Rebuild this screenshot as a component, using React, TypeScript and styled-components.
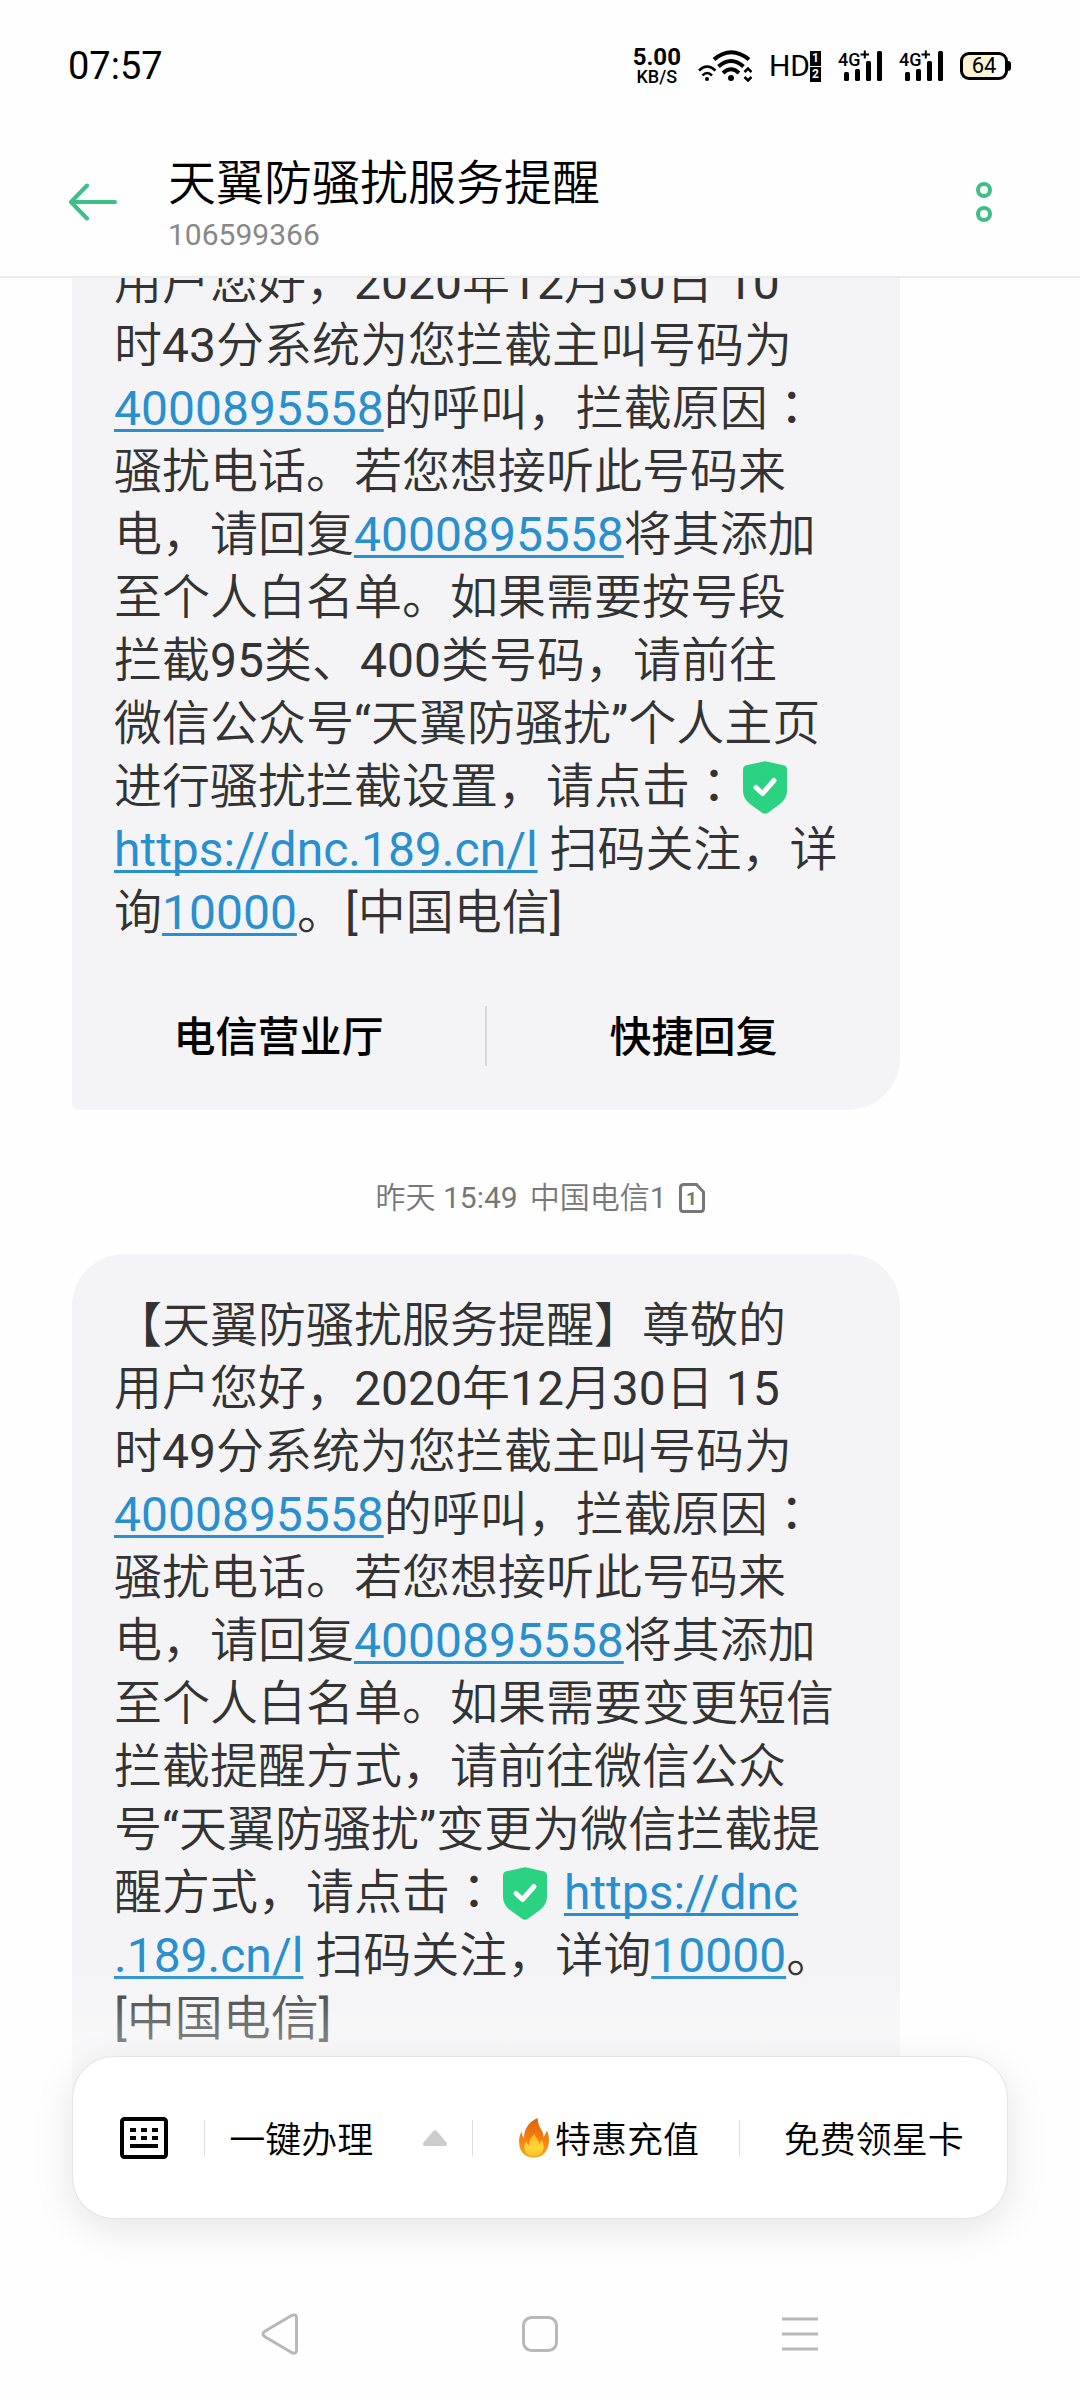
import React from "react";
import styled, { createGlobalStyle } from "styled-components";

const SANS = `Roboto, "Noto Sans CJK SC DemiLight", "Noto Sans CJK SC", sans-serif`;
const SANS_STRONG = `Roboto, "Noto Sans CJK SC", sans-serif`;
const GREEN = "#3cc086";

const GlobalStyle = createGlobalStyle`
  *, *::before, *::after { box-sizing: border-box; }
  body {
    margin: 0;
    background: #fefefe;
    color: #000;
    font-family: ${SANS};
    text-spacing-trim: space-all;
  }
  button {
    padding: 0;
    border: 0;
    background: none;
    color: inherit;
    font: inherit;
    cursor: pointer;
  }
  svg { display: block; flex: none; }
`;

const Page = styled.div`
  display: flex;
  flex-direction: column;
  height: 100vh;
  overflow: hidden;
`;

/* Status bar */

const StatusBar = styled.div`
  display: flex;
  align-items: center;
  justify-content: space-between;
  flex: none;
  height: 128px;
  padding: 4px 69px 0 68px;
`;

const Clock = styled.time`
  font-size: 38px;
  line-height: 44px;
`;

const StatusIcons = styled.div`
  display: flex;
  align-items: center;
  gap: 17px;
`;

const Speed = styled.div`
  display: flex;
  flex-direction: column;
  align-items: center;
  font-weight: 700;
`;

const SpeedValue = styled.span`
  font-size: 24px;
  line-height: 22px;
`;

const SpeedUnit = styled.span`
  font-size: 18px;
  font-weight: 500;
  line-height: 18px;
`;

const HdMark = styled.div`
  display: flex;
  align-items: center;
  font-size: 30px;
  line-height: 30px;
`;

const SimStack = styled.div`
  display: grid;
  gap: 1px;
`;

const SimCell = styled.span`
  width: 11px;
  background: #000;
  color: #fff;
  font-size: 12px;
  font-weight: 700;
  line-height: 15px;
  text-align: center;
`;

const Battery = styled.div`
  display: flex;
  align-items: center;
`;

const BatteryBody = styled.span`
  width: 48px;
  height: 28px;
  border: 3px solid #000;
  border-radius: 9px;
  background: linear-gradient(90deg, #fcf3d2 64%, #fff 64%);
  font-size: 22px;
  line-height: 22px;
  text-align: center;
`;

const BatteryTip = styled.span`
  width: 3px;
  height: 10px;
  border-radius: 0 3px 3px 0;
  background: #000;
`;

/* Conversation header */

const Header = styled.header`
  display: flex;
  align-items: center;
  flex: none;
  height: 150px;
  padding: 0 72px 0 68px;
  border-bottom: 2px solid #ececee;
`;

const IconButton = styled.button`
  display: flex;
  align-items: center;
  justify-content: center;
`;

const Contact = styled.div`
  flex: 1;
  min-width: 0;
  padding: 10px 0 0 50px;
`;

const ContactName = styled.h1`
  margin: 0;
  font-size: 48px;
  font-weight: 400;
  line-height: 56px;
`;

const ContactNumber = styled.p`
  margin: 0;
  color: #888;
  font-size: 30px;
  line-height: 46px;
`;

const MenuButton = styled(IconButton)`
  width: 48px;
`;

/* Messages */

const Thread = styled.main`
  position: relative;
  display: flex;
  flex: 1;
  flex-direction: column;
  justify-content: flex-end;
  min-height: 0;
  overflow: hidden;

  &::after {
    content: "";
    position: absolute;
    right: 0;
    bottom: 0;
    left: 0;
    height: 132px;
    background: linear-gradient(rgba(254, 254, 254, 0), rgba(254, 254, 254, 0.72));
    pointer-events: none;
  }
`;

const Bubble = styled.article<{ $last?: boolean }>`
  flex: none;
  margin: 0 180px 0 72px;
  border-radius: ${(p) => (p.$last ? "52px 52px 0 0" : "52px 52px 52px 6px")};
  background: #f4f4f6;
`;

const MessageText = styled.p<{ $last?: boolean }>`
  margin: 0;
  padding: 40px 42px ${(p) => (p.$last ? 50 : 18)}px;
  color: #333;
  font-size: 48px;
  line-height: 63px;
  white-space: nowrap;
`;

const TextLink = styled.a`
  color: #2990d0;
  text-decoration: underline;
  text-decoration-skip-ink: none;
  text-decoration-thickness: 3px;
  text-underline-offset: 4px;
`;

const CenteredColon = styled.span`
  font-family: Roboto, "Noto Sans CJK TC", sans-serif;
`;

const ShieldIcon = styled.svg`
  display: inline-block;
  margin: 0 5px;
  vertical-align: -11px;
`;

const Actions = styled.div`
  display: flex;
  align-items: center;
  height: 148px;
`;

const Action = styled.button`
  flex: 1;
  && {
    padding-top: 4px;
    font-family: ${SANS_STRONG};
    font-size: 42px;
    font-weight: 500;
    line-height: 60px;
  }
`;

const Divider = styled.span<{ $tall?: boolean }>`
  flex: none;
  width: ${(p) => (p.$tall ? 2 : 1)}px;
  height: ${(p) => (p.$tall ? 60 : 36)}px;
  background: ${(p) => (p.$tall ? "#d8d8da" : "#dedede")};
`;

const Stamp = styled.div`
  display: flex;
  align-items: center;
  justify-content: center;
  flex: none;
  gap: 12px;
  margin: 68px 0 36px;
  color: #777;
  font-size: 30px;
  line-height: 40px;
`;

/* Service menu */

const Dock = styled.footer`
  position: relative;
  flex: none;
  margin-top: -44px;
  padding: 0 72px 49px;
`;

const DockCard = styled.nav`
  display: flex;
  align-items: center;
  height: 163px;
  border: 1px solid #e4e4e4;
  border-radius: 42px;
  background: #fff;
  box-shadow: 0 10px 40px rgba(0, 0, 0, 0.1);
`;

const KeyboardButton = styled(IconButton)`
  width: 131px;
  height: 100%;
  && { padding-left: 10px; }
`;

const DockItem = styled.button`
  display: flex;
  align-items: center;
  flex: 1;
  justify-content: center;
  height: 100%;
  && {
    font-size: 36px;
    line-height: 48px;
  }
`;

const DockLabel = styled.span<{ $grow?: boolean }>`
  flex: ${(p) => (p.$grow ? "1" : "none")};
  padding-top: 6px;
`;

const CaretSlot = styled.span`
  display: flex;
  justify-content: center;
  width: 74px;
`;

const FlameSlot = styled.span`
  display: flex;
  justify-content: center;
  width: 42px;
`;

/* System navigation */

const SystemNav = styled.nav`
  display: grid;
  grid-template-columns: repeat(3, 1fr);
  flex: none;
  height: 132px;
  padding: 0 150px;
`;

const WifiIcon = () => (
  <svg width="54" height="32" viewBox="0 0 54 32" fill="none" stroke="#000" aria-hidden="true">
    <g strokeWidth="4">
      <path d="M16 9.500Q33 -5 51 9.500" />
      <path d="M20.500 16.500Q33 5.500 45.500 16.500" />
      <path d="M25 23Q33 15.500 41 23" />
    </g>
    <g strokeWidth="2.600">
      <path d="M1 20.500Q9 12.500 17.500 20.500" />
      <path d="M4.500 25.500Q9 20.500 14 25.500" />
      <path d="M46.500 22L50 18.500L53.500 22M46.500 27L50 30.500L53.500 27" />
    </g>
    <circle cx="33" cy="28" r="3" fill="#000" stroke="none" />
    <circle cx="9" cy="29" r="2" fill="#000" stroke="none" />
  </svg>
);

const SignalIcon = () => (
  <svg width="44" height="32" viewBox="0 0 44 32" aria-label="4G+">
    <text x="0" y="16" fontFamily="Roboto, sans-serif" fontSize="18" fontWeight="500">
      4G
    </text>
    <path d="M22.500 4.500H31M26.800 0.500V8.500" stroke="#000" strokeWidth="2" />
    <rect x="6" y="22" width="5" height="9" rx="1.500" />
    <rect x="17" y="19" width="5" height="12" rx="1.500" />
    <rect x="28" y="11" width="5" height="20" rx="1.500" />
    <rect x="39" y="1" width="5" height="30" rx="1.500" />
  </svg>
);

const Shield = () => (
  <ShieldIcon width="44" height="53" viewBox="0 0 44 53" aria-hidden="true">
    <path
      d="M19.500 0.700Q22 -0.300 24.500 0.700L40.500 4.300Q44 5.200 44 8.500V29C44 36 41 40 36 43.800L25 51.800Q22 53.800 19 51.800L8 43.800C3 40 0 36 0 29V8.500Q0 5.200 3.500 4.300Z"
      fill="#2bd282"
    />
    <path d="M13 26.500L19.500 32.500L31 19.500" fill="none" stroke="#fff" strokeWidth="5" strokeLinecap="round" strokeLinejoin="round" />
  </ShieldIcon>
);

const SimIcon = () => (
  <svg width="26" height="30" viewBox="0 0 26 30" aria-label="SIM 1">
    <path d="M5 1.500H17.500L24.500 9V25.500Q24.500 28.500 21.500 28.500H4.500Q1.500 28.500 1.500 25.500V4.500Q1.500 1.500 5 1.500Z" fill="none" stroke="#777" strokeWidth="3" />
    <text x="12.500" y="22" textAnchor="middle" fontFamily="Roboto, sans-serif" fontSize="19" fontWeight="700" fill="#777">
      1
    </text>
  </svg>
);

const KeyboardIcon = () => (
  <svg width="48" height="42" viewBox="0 0 48 42" aria-hidden="true">
    <rect x="2" y="2" width="44" height="38" rx="2.500" fill="none" stroke="#000" strokeWidth="4" />
    <path d="M10 13H16M21 13H27M32 13H38M10 21H16M21 21H27M32 21H38M10 29H38" stroke="#000" strokeWidth="4" />
  </svg>
);

const FlameIcon = () => (
  <svg width="32" height="40" viewBox="0 0 32 40" aria-hidden="true">
    <defs>
      <linearGradient id="flameOuter" x1="0" y1="0" x2="0" y2="1">
        <stop offset="0" stopColor="#d8620c" />
        <stop offset="0.450" stopColor="#f47a12" />
        <stop offset="1" stopColor="#f9a41c" />
      </linearGradient>
      <linearGradient id="flameInner" x1="0" y1="0" x2="0" y2="1">
        <stop offset="0" stopColor="#fbb61f" />
        <stop offset="0.600" stopColor="#fdd835" />
        <stop offset="1" stopColor="#f9c02a" />
      </linearGradient>
    </defs>
    <path
      d="M19.500 0C20 5 21 8 23.500 12C24.800 14 25.500 16 25.500 19C26.800 17.500 28 15 29 12.500C31 17 31.500 22 30.500 27C29 35 23 39.500 16 39.500C8 39.500 2.500 35 1.300 27C0.500 21.500 1.500 18 3.500 13.500C4 16.500 4.500 18.500 6 20C6 11.500 10.500 4 19.500 0Z"
      fill="url(#flameOuter)"
    />
    <path
      d="M16.500 16C18 19.500 20 21.500 21.500 26C22.500 24.500 23 23 23.500 21.500C26 26 26.500 30 24.500 33.500C22.500 37 19.500 38.500 16 38.500C11 38.500 7 35.500 6.500 31C6.200 28 7 25.500 8.500 23C9 25 9.500 26.500 11 27.500C11 23 13 19 16.500 16Z"
      fill="url(#flameInner)"
    />
  </svg>
);

const PhoneLink = ({ number }: { number: string }) => <TextLink href={`tel:${number}`}>{number}</TextLink>;
const Colon = () => <CenteredColon>：</CenteredColon>;

export default function App() {
  return (
    <Page>
      <GlobalStyle />
      <StatusBar>
        <Clock>07:57</Clock>
        <StatusIcons>
          <Speed>
            <SpeedValue>5.00</SpeedValue>
            <SpeedUnit>KB/S</SpeedUnit>
          </Speed>
          <WifiIcon />
          <HdMark>
            HD
            <SimStack>
              <SimCell>1</SimCell>
              <SimCell>2</SimCell>
            </SimStack>
          </HdMark>
          <SignalIcon />
          <SignalIcon />
          <Battery>
            <BatteryBody>64</BatteryBody>
            <BatteryTip />
          </Battery>
        </StatusIcons>
      </StatusBar>

      <Header>
        <IconButton type="button" aria-label="返回">
          <svg width="50" height="38" viewBox="0 0 50 38" fill="none" stroke={GREEN} strokeWidth="4" strokeLinecap="round" strokeLinejoin="round">
            <path d="M19 2.500L3 19L19 35.500M3 19H47" />
          </svg>
        </IconButton>
        <Contact>
          <ContactName>天翼防骚扰服务提醒</ContactName>
          <ContactNumber>106599366</ContactNumber>
        </Contact>
        <MenuButton type="button" aria-label="更多">
          <svg width="16" height="40" viewBox="0 0 16 40" fill="none" stroke={GREEN} strokeWidth="4">
            <circle cx="8" cy="8" r="6" />
            <circle cx="8" cy="32" r="6" />
          </svg>
        </MenuButton>
      </Header>

      <Thread>
        <Bubble>
          <MessageText>
            用户您好，2020年12月30日 10
            <br />
            时43分系统为您拦截主叫号码为
            <br />
            <PhoneLink number="4000895558" />
            的呼叫，拦截原因
            <Colon />
            <br />
            骚扰电话。若您想接听此号码来
            <br />
            电，请回复
            <PhoneLink number="4000895558" />
            将其添加
            <br />
            至个人白名单。如果需要按号段
            <br />
            拦截95类、400类号码，请前往
            <br />
            微信公众号“天翼防骚扰”个人主页
            <br />
            进行骚扰拦截设置，请点击
            <Colon />
            <Shield />
            <br />
            <TextLink href="https://dnc.189.cn/l">https://dnc.189.cn/l</TextLink> 扫码关注，详
            <br />
            询
            <PhoneLink number="10000" />
            。[中国电信]
          </MessageText>
          <Actions>
            <Action type="button">电信营业厅</Action>
            <Divider $tall />
            <Action type="button">快捷回复</Action>
          </Actions>
        </Bubble>

        <Stamp>
          <span>昨天 15:49</span>
          <span>中国电信1</span>
          <SimIcon />
        </Stamp>

        <Bubble $last>
          <MessageText $last>
            【天翼防骚扰服务提醒】尊敬的
            <br />
            用户您好，2020年12月30日 15
            <br />
            时49分系统为您拦截主叫号码为
            <br />
            <PhoneLink number="4000895558" />
            的呼叫，拦截原因
            <Colon />
            <br />
            骚扰电话。若您想接听此号码来
            <br />
            电，请回复
            <PhoneLink number="4000895558" />
            将其添加
            <br />
            至个人白名单。如果需要变更短信
            <br />
            拦截提醒方式，请前往微信公众
            <br />
            号“天翼防骚扰”变更为微信拦截提
            <br />
            醒方式，请点击
            <Colon />
            <Shield />{" "}
            <TextLink href="https://dnc.189.cn/l">
              https://dnc
              <br />
              .189.cn/l
            </TextLink>{" "}
            扫码关注，详询
            <PhoneLink number="10000" />
            。
            <br />
            [中国电信]
          </MessageText>
        </Bubble>
      </Thread>

      <Dock>
        <DockCard aria-label="服务菜单">
          <KeyboardButton type="button" aria-label="键盘">
            <KeyboardIcon />
          </KeyboardButton>
          <Divider />
          <DockItem type="button">
            <DockLabel $grow>一键办理</DockLabel>
            <CaretSlot>
              <svg width="24" height="16" viewBox="0 0 24 16" aria-hidden="true">
                <path d="M10.500 0.800Q12 -0.500 13.500 0.800L23.500 12.500Q25 16 22 16H2Q-1 16 0.500 12.500Z" fill="#ccc" />
              </svg>
            </CaretSlot>
          </DockItem>
          <Divider />
          <DockItem type="button">
            <FlameSlot>
              <FlameIcon />
            </FlameSlot>
            <DockLabel>特惠充值</DockLabel>
          </DockItem>
          <Divider />
          <DockItem type="button">
            <DockLabel>免费领星卡</DockLabel>
          </DockItem>
        </DockCard>
      </Dock>

      <SystemNav aria-label="系统导航">
        <IconButton type="button" aria-label="后退">
          <svg width="38" height="42" viewBox="0 0 38 42" fill="none" stroke="#b8b8b8" strokeWidth="3">
            <path d="M30.500 2.500L3.500 18.500Q0.500 21 3.500 23.500L30.500 39.500Q35.500 41.500 35.500 37V5Q35.500 0.500 30.500 2.500Z" />
          </svg>
        </IconButton>
        <IconButton type="button" aria-label="主屏幕">
          <svg width="36" height="36" viewBox="0 0 36 36" fill="none" stroke="#b8b8b8" strokeWidth="3">
            <rect x="1.500" y="1.500" width="33" height="33" rx="8" />
          </svg>
        </IconButton>
        <IconButton type="button" aria-label="最近任务">
          <svg width="36" height="34" viewBox="0 0 36 34" stroke="#b8b8b8" strokeWidth="3">
            <path d="M0 2H36M0 17H36M0 32H36" />
          </svg>
        </IconButton>
      </SystemNav>
    </Page>
  );
}
